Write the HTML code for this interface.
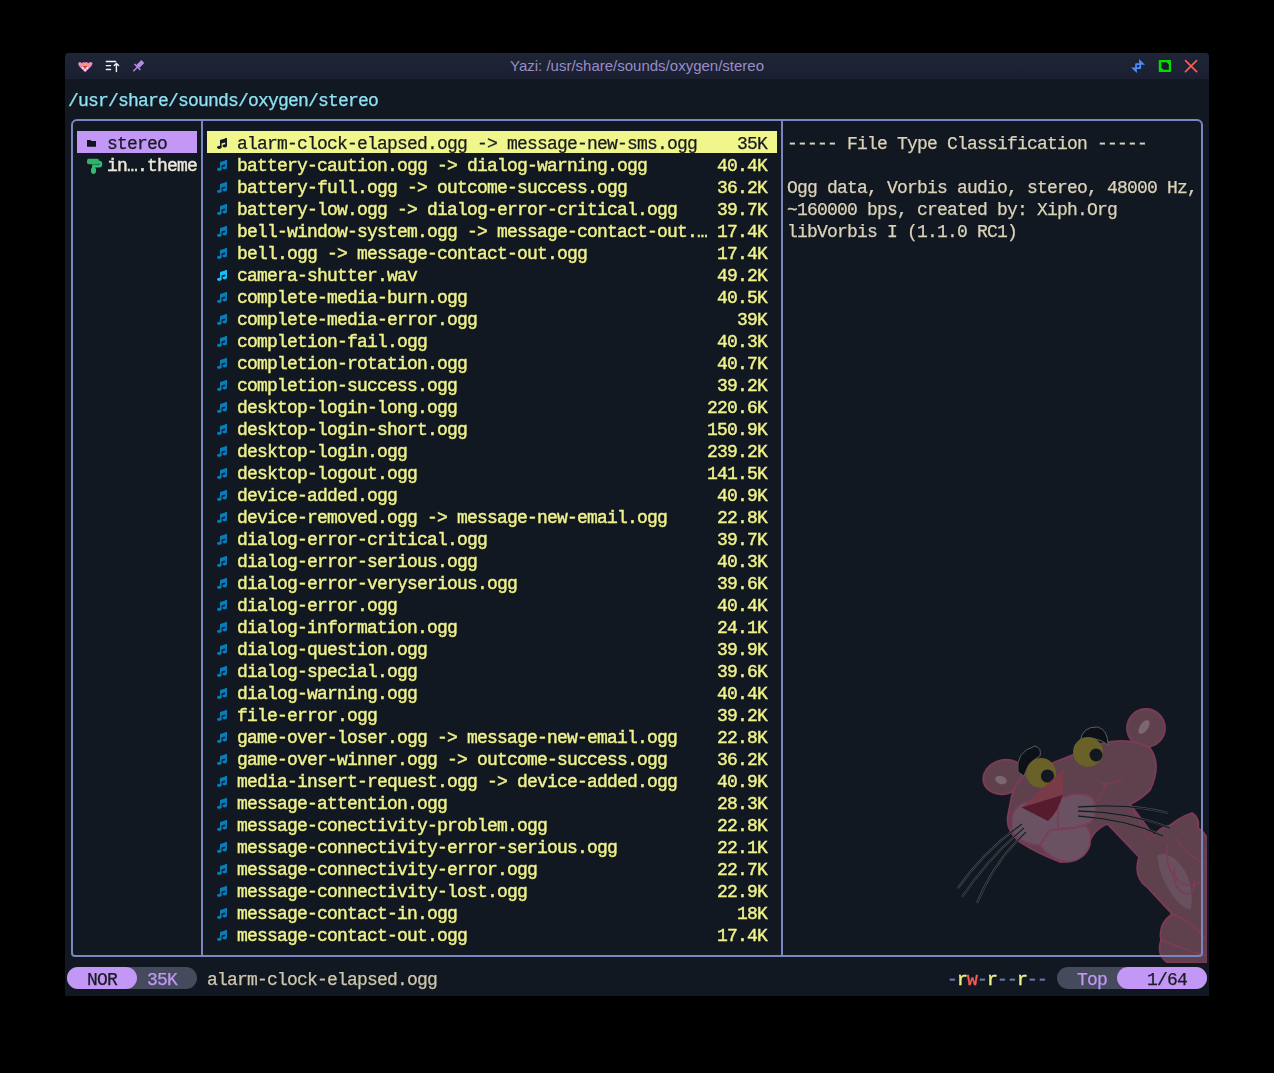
<!DOCTYPE html>
<html><head><meta charset="utf-8"><style>
*{margin:0;padding:0;box-sizing:border-box}
html,body{width:1274px;height:1073px;background:#000;overflow:hidden}
body{position:relative;font-family:"Liberation Mono",monospace;font-size:18px;letter-spacing:-0.8018px}
#win{position:absolute;left:65px;top:53px;width:1144px;height:943px;background:#121822;border-radius:4px 4px 0 0;overflow:hidden}
#tb{position:absolute;left:0;top:0;width:1144px;height:26px;background:linear-gradient(#1e2537,#1a2030)}
#title{position:absolute;left:0;width:1144px;top:0;height:26px;line-height:26px;text-align:center;font-family:"Liberation Sans",sans-serif;font-size:15px;letter-spacing:0;color:#9a8dc6}
.r{position:absolute;height:22px;line-height:22px;white-space:pre;will-change:transform;-webkit-text-stroke:0.25px currentColor}
.t{position:absolute;white-space:pre;height:22px;line-height:22px;top:2px}
.ic{position:absolute;display:block}
.b{font-weight:normal;-webkit-text-stroke:0.42px currentColor}
.hl{position:absolute;height:22px}
.ln{position:absolute;background:#7986c0}
</style></head><body>

<div id="win"><div id="tb"></div><div id="title">Yazi: /usr/share/sounds/oxygen/stereo</div></div>
<svg style="position:absolute;left:0;top:0" width="1274" height="90" viewBox="0 0 1274 90"><path d="M78.3 63.2 Q79.5 61.3 81 62.6 L82.2 63.2 Q83.6 61.2 85 62.8 Q86.6 61.2 88 63.2 L89.3 62.6 Q90.8 61.3 92.6 63.2 Q92.3 65 90.8 66.8 L85.2 72.2 L79.6 66.8 Q78.2 65 78.3 63.2 Z" fill="#f08cbd"/><circle cx="83.6" cy="64.6" r="1.1" fill="#d4bb10"/><circle cx="87" cy="64.6" r="1.1" fill="#d4bb10"/><path d="M82.5 66 L87.5 66 L85.1 68.6 Z" fill="#e5207a"/><circle cx="82.8" cy="68" r="1" fill="#f0eef0"/><circle cx="87.2" cy="68" r="1" fill="#f0eef0"/><circle cx="85.1" cy="70" r="1" fill="#f0eef0"/><g stroke="#f2f2f2" stroke-width="1.4" fill="none" stroke-linecap="round"><path d="M106.3 61.5 H115.6 M106.3 65.6 H110.6 M106.3 69.5 H110.6 M116.4 63.4 V71.6 M114.2 65.6 L116.4 63.4 L118.6 65.6"/></g><g fill="#b38de2"><path d="M141.4 60 L144.3 62.9 L139.3 67.9 L136.4 65 Z"/><path d="M134 64.6 L135.1 63.5 L141 69.4 L139.9 70.5 Z"/></g><path d="M137.6 67 L133.3 71.2" stroke="#b38de2" stroke-width="1.5"/><g fill="#4f8bf7"><path d="M1139.1 59 L1145 64.8 L1139.1 64.8 Z"/><path d="M1131 67.4 L1136.9 67.4 L1136.9 73.1 Z"/><path fill-rule="evenodd" d="M1136.2 63.2 H1140.1 Q1141.1 63.2 1141.1 64.2 V68.1 Q1141.1 69.1 1140.1 69.1 H1136.2 Q1135.2 69.1 1135.2 68.1 V64.2 Q1135.2 63.2 1136.2 63.2 Z M1136.9 64.9 V67.3 H1139.3 V64.9 Z"/></g><rect x="1158.8" y="60" width="12.2" height="12" rx="0.8" fill="#00e000"/><path d="M1161.3 62.2 H1166.6 L1168.8 64.4 V69.8 H1163.5 L1161.3 67.6 Z" fill="#161b27"/><g stroke="#ff5a55" stroke-width="1.7" stroke-linecap="round"><path d="M1185.5 60.6 L1196.6 71.7 M1196.6 60.6 L1185.5 71.7"/></g></svg>
<svg style="position:absolute;left:940px;top:690px" width="267" height="273" viewBox="940 690 267 273"><ellipse cx="1004" cy="777" rx="21" ry="17" transform="rotate(-15 1004 777)" fill="#5f414e" stroke="#7e3a58" stroke-width="1.8"/><ellipse cx="1001" cy="780" rx="6" ry="4" transform="rotate(20 1001 780)" fill="#7b6774"/><circle cx="1146" cy="728" r="19" fill="#5f414e" stroke="#7e3a58" stroke-width="1.8"/><ellipse cx="1144" cy="727" rx="4" ry="8" transform="rotate(35 1144 727)" fill="#7b6774"/><path d="M1012 795 Q1018 772 1045 766 L1100 744 Q1130 736 1150 748 Q1162 765 1150 790 Q1140 800 1130 804 L1154 836 Q1160 827 1169 826 Q1180 817 1192 813 Q1200 818 1198 828 Q1210 835 1207 850 L1207 963 L1168 963 Q1156 955 1161 940 Q1158 924 1172 914 L1147 887 Q1133 877 1139 857 L1107.5 824 Q1092 830 1088.5 846 Q1080 862 1060 862 Q1035 852 1020 842 Q1005 830 1008 815 Z" fill="#5f414e" stroke="#7e3a58" stroke-width="1.8"/><path d="M1157 856 Q1160 880 1176 900 Q1188 912 1191 908 Q1195 880 1178 862 Q1165 850 1157 856 Z" fill="#6a5262" opacity="0.9"/><g fill="none" stroke="#7e3a58" stroke-width="1.4"><path d="M1176 838 Q1188 858 1207 864"/><path d="M1168 843 Q1163 872 1183 884 Q1198 888 1204 876"/><path d="M1175 866 Q1171 890 1187 894 Q1196 893 1194 880"/><path d="M1130 804 L1150 842"/><path d="M1161 940 Q1185 950 1207 956"/><path d="M1172 914 Q1195 922 1207 942"/></g><path d="M1012 818 Q1015 800 1040 800 L1062 812 Q1065 838 1040 845 Q1020 845 1012 830 Z" fill="#6a5262" stroke="#7e3a58" stroke-width="1.5"/><path d="M1040 845 Q1050 860 1068 862 Q1085 860 1090 845 Q1092 830 1085 825 Q1065 830 1050 830 Z" fill="#6a5262" stroke="#7e3a58" stroke-width="1.5"/><path d="M1058 800 Q1075 790 1092 797 Q1100 812 1090 823 Q1075 830 1058 828 Z" fill="#6a5262" stroke="#7e3a58" stroke-width="1.5"/><path d="M1018 772 Q1015 752 1035 746 Q1042 748 1040 756 Q1028 762 1024 776 Z" fill="#0d1017" stroke="#5a5c64" stroke-width="1"/><path d="M1080 742 Q1082 726 1098 727 Q1108 730 1108 745 Q1095 734 1080 742 Z" fill="#0d1017" stroke="#5a5c64" stroke-width="1"/><circle cx="1041" cy="773" r="15" fill="#6a6129"/><circle cx="1047.5" cy="776" r="6.6" fill="#121722"/><circle cx="1088" cy="752" r="15" fill="#6a6129"/><circle cx="1096" cy="755" r="6.5" fill="#121722"/><path d="M1021.6 807.6 L1064 769 L1062.7 795 Z" fill="#7a3b48"/><path d="M1021.6 807.6 L1062.7 795 Q1058 812 1048 821 Z" fill="#561b2c"/><path d="M1100 783 Q1112 786 1123 778 M1105 784 Q1104 796 1094 803" fill="none" stroke="#7e3a58" stroke-width="1.2"/><g fill="none" stroke="#4a4c55" stroke-width="2.2"><path d="M1022 824 Q985 850 958 888"/><path d="M1024 828 Q990 856 962 897"/><path d="M1026 832 Q995 860 977 903"/><path d="M1078 807 Q1130 803 1168 813"/><path d="M1078 811 Q1130 812 1170 828"/><path d="M1078 816 Q1130 820 1163 836"/></g><g fill="none" stroke="#0c0f15" stroke-width="0.9"><path d="M1022 824 Q985 850 958 888"/><path d="M1024 828 Q990 856 962 897"/><path d="M1026 832 Q995 860 977 903"/><path d="M1078 807 Q1130 803 1168 813"/><path d="M1078 811 Q1130 812 1170 828"/><path d="M1078 816 Q1130 820 1163 836"/></g></svg>
<div class="r" style="left:67.5px;top:87px;color:#8de3f5"><span class="t" style="top:3px">/usr/share/sounds/oxygen/stereo</span></div>
<div style="position:absolute;left:71px;top:119px;width:1132px;height:838px;border:2px solid #7986c0;border-radius:6px 6px 4px 4px"></div>
<div class="ln" style="left:201px;top:119px;width:2px;height:838px"></div>
<div class="ln" style="left:781px;top:119px;width:2px;height:838px"></div>
<div class="hl" style="left:77px;top:131px;width:120px;background:#c297f5"></div>
<div class="r" style="left:106.5px;top:131px;color:#161a22"><span class="t">stereo</span></div>
<svg style="position:absolute;left:87px;top:139px" width="10" height="9" viewBox="0 0 10 9"><path d="M0 1 H3.6 L4.4 2 H9 V7.8 H0 Z" fill="#11141c"/></svg>
<div class="r b" style="left:106.5px;top:153px;color:#ebe8da"><span class="t">in….theme</span></div>
<svg style="position:absolute;left:86px;top:158px" width="17" height="17" viewBox="0 0 17 17"><path d="M12 4.2 H13.2 Q14.8 4.2 14.8 5.8 V6.4 Q14.8 8 13.2 8 H7.5 V10" fill="none" stroke="#31bd6f" stroke-width="2.8"/><rect x="1" y="0.7" width="12" height="5.5" rx="1.8" fill="#2db46a"/><rect x="5" y="9" width="5" height="7" rx="2.4" fill="#31bd6f"/></svg>
<div class="hl" style="left:207px;top:131px;width:570px;background:#f0f68b"></div>
<div style="position:absolute;left:217px;top:138px;width:10px;height:11px;color:#161a22"><svg class="ic" width="10" height="11" viewBox="0 0 10 11"><g fill="currentColor"><polygon points="3,2 10,0 10,4 4.6,5.6 3,5.8"/><rect x="3" y="2" width="1.6" height="7.5"/><rect x="8.2" y="0" width="1.8" height="8"/><ellipse cx="2.2" cy="9.3" rx="2.2" ry="1.6"/><ellipse cx="7.7" cy="7.8" rx="2.3" ry="1.6"/></g></svg></div>
<div class="r" style="left:236.5px;top:131px;color:#161a22"><span class="t">alarm-clock-elapsed.ogg -&gt; message-new-sms.ogg</span></div>
<div class="r" style="left:736.5px;top:131px;color:#161a22"><span class="t">35K</span></div>
<div style="position:absolute;left:217px;top:160px;width:10px;height:11px;color:#0a7cb8"><svg class="ic" width="10" height="11" viewBox="0 0 10 11"><g fill="currentColor"><polygon points="3,2 10,0 10,4 4.6,5.6 3,5.8"/><rect x="3" y="2" width="1.6" height="7.5"/><rect x="8.2" y="0" width="1.8" height="8"/><ellipse cx="2.2" cy="9.3" rx="2.2" ry="1.6"/><ellipse cx="7.7" cy="7.8" rx="2.3" ry="1.6"/></g></svg></div>
<div class="r b" style="left:236.5px;top:153px;color:#f0f28a"><span class="t">battery-caution.ogg -&gt; dialog-warning.ogg</span></div>
<div class="r b" style="left:716.5px;top:153px;color:#f0f28a"><span class="t">40.4K</span></div>
<div style="position:absolute;left:217px;top:182px;width:10px;height:11px;color:#0a7cb8"><svg class="ic" width="10" height="11" viewBox="0 0 10 11"><g fill="currentColor"><polygon points="3,2 10,0 10,4 4.6,5.6 3,5.8"/><rect x="3" y="2" width="1.6" height="7.5"/><rect x="8.2" y="0" width="1.8" height="8"/><ellipse cx="2.2" cy="9.3" rx="2.2" ry="1.6"/><ellipse cx="7.7" cy="7.8" rx="2.3" ry="1.6"/></g></svg></div>
<div class="r b" style="left:236.5px;top:175px;color:#f0f28a"><span class="t">battery-full.ogg -&gt; outcome-success.ogg</span></div>
<div class="r b" style="left:716.5px;top:175px;color:#f0f28a"><span class="t">36.2K</span></div>
<div style="position:absolute;left:217px;top:204px;width:10px;height:11px;color:#0a7cb8"><svg class="ic" width="10" height="11" viewBox="0 0 10 11"><g fill="currentColor"><polygon points="3,2 10,0 10,4 4.6,5.6 3,5.8"/><rect x="3" y="2" width="1.6" height="7.5"/><rect x="8.2" y="0" width="1.8" height="8"/><ellipse cx="2.2" cy="9.3" rx="2.2" ry="1.6"/><ellipse cx="7.7" cy="7.8" rx="2.3" ry="1.6"/></g></svg></div>
<div class="r b" style="left:236.5px;top:197px;color:#f0f28a"><span class="t">battery-low.ogg -&gt; dialog-error-critical.ogg</span></div>
<div class="r b" style="left:716.5px;top:197px;color:#f0f28a"><span class="t">39.7K</span></div>
<div style="position:absolute;left:217px;top:226px;width:10px;height:11px;color:#0a7cb8"><svg class="ic" width="10" height="11" viewBox="0 0 10 11"><g fill="currentColor"><polygon points="3,2 10,0 10,4 4.6,5.6 3,5.8"/><rect x="3" y="2" width="1.6" height="7.5"/><rect x="8.2" y="0" width="1.8" height="8"/><ellipse cx="2.2" cy="9.3" rx="2.2" ry="1.6"/><ellipse cx="7.7" cy="7.8" rx="2.3" ry="1.6"/></g></svg></div>
<div class="r b" style="left:236.5px;top:219px;color:#f0f28a"><span class="t">bell-window-system.ogg -&gt; message-contact-out.…</span></div>
<div class="r b" style="left:716.5px;top:219px;color:#f0f28a"><span class="t">17.4K</span></div>
<div style="position:absolute;left:217px;top:248px;width:10px;height:11px;color:#0a7cb8"><svg class="ic" width="10" height="11" viewBox="0 0 10 11"><g fill="currentColor"><polygon points="3,2 10,0 10,4 4.6,5.6 3,5.8"/><rect x="3" y="2" width="1.6" height="7.5"/><rect x="8.2" y="0" width="1.8" height="8"/><ellipse cx="2.2" cy="9.3" rx="2.2" ry="1.6"/><ellipse cx="7.7" cy="7.8" rx="2.3" ry="1.6"/></g></svg></div>
<div class="r b" style="left:236.5px;top:241px;color:#f0f28a"><span class="t">bell.ogg -&gt; message-contact-out.ogg</span></div>
<div class="r b" style="left:716.5px;top:241px;color:#f0f28a"><span class="t">17.4K</span></div>
<div style="position:absolute;left:217px;top:270px;width:10px;height:11px;color:#19bdf9"><svg class="ic" width="10" height="11" viewBox="0 0 10 11"><g fill="currentColor"><polygon points="3,2 10,0 10,4 4.6,5.6 3,5.8"/><rect x="3" y="2" width="1.6" height="7.5"/><rect x="8.2" y="0" width="1.8" height="8"/><ellipse cx="2.2" cy="9.3" rx="2.2" ry="1.6"/><ellipse cx="7.7" cy="7.8" rx="2.3" ry="1.6"/></g></svg></div>
<div class="r b" style="left:236.5px;top:263px;color:#f0f28a"><span class="t">camera-shutter.wav</span></div>
<div class="r b" style="left:716.5px;top:263px;color:#f0f28a"><span class="t">49.2K</span></div>
<div style="position:absolute;left:217px;top:292px;width:10px;height:11px;color:#0a7cb8"><svg class="ic" width="10" height="11" viewBox="0 0 10 11"><g fill="currentColor"><polygon points="3,2 10,0 10,4 4.6,5.6 3,5.8"/><rect x="3" y="2" width="1.6" height="7.5"/><rect x="8.2" y="0" width="1.8" height="8"/><ellipse cx="2.2" cy="9.3" rx="2.2" ry="1.6"/><ellipse cx="7.7" cy="7.8" rx="2.3" ry="1.6"/></g></svg></div>
<div class="r b" style="left:236.5px;top:285px;color:#f0f28a"><span class="t">complete-media-burn.ogg</span></div>
<div class="r b" style="left:716.5px;top:285px;color:#f0f28a"><span class="t">40.5K</span></div>
<div style="position:absolute;left:217px;top:314px;width:10px;height:11px;color:#0a7cb8"><svg class="ic" width="10" height="11" viewBox="0 0 10 11"><g fill="currentColor"><polygon points="3,2 10,0 10,4 4.6,5.6 3,5.8"/><rect x="3" y="2" width="1.6" height="7.5"/><rect x="8.2" y="0" width="1.8" height="8"/><ellipse cx="2.2" cy="9.3" rx="2.2" ry="1.6"/><ellipse cx="7.7" cy="7.8" rx="2.3" ry="1.6"/></g></svg></div>
<div class="r b" style="left:236.5px;top:307px;color:#f0f28a"><span class="t">complete-media-error.ogg</span></div>
<div class="r b" style="left:736.5px;top:307px;color:#f0f28a"><span class="t">39K</span></div>
<div style="position:absolute;left:217px;top:336px;width:10px;height:11px;color:#0a7cb8"><svg class="ic" width="10" height="11" viewBox="0 0 10 11"><g fill="currentColor"><polygon points="3,2 10,0 10,4 4.6,5.6 3,5.8"/><rect x="3" y="2" width="1.6" height="7.5"/><rect x="8.2" y="0" width="1.8" height="8"/><ellipse cx="2.2" cy="9.3" rx="2.2" ry="1.6"/><ellipse cx="7.7" cy="7.8" rx="2.3" ry="1.6"/></g></svg></div>
<div class="r b" style="left:236.5px;top:329px;color:#f0f28a"><span class="t">completion-fail.ogg</span></div>
<div class="r b" style="left:716.5px;top:329px;color:#f0f28a"><span class="t">40.3K</span></div>
<div style="position:absolute;left:217px;top:358px;width:10px;height:11px;color:#0a7cb8"><svg class="ic" width="10" height="11" viewBox="0 0 10 11"><g fill="currentColor"><polygon points="3,2 10,0 10,4 4.6,5.6 3,5.8"/><rect x="3" y="2" width="1.6" height="7.5"/><rect x="8.2" y="0" width="1.8" height="8"/><ellipse cx="2.2" cy="9.3" rx="2.2" ry="1.6"/><ellipse cx="7.7" cy="7.8" rx="2.3" ry="1.6"/></g></svg></div>
<div class="r b" style="left:236.5px;top:351px;color:#f0f28a"><span class="t">completion-rotation.ogg</span></div>
<div class="r b" style="left:716.5px;top:351px;color:#f0f28a"><span class="t">40.7K</span></div>
<div style="position:absolute;left:217px;top:380px;width:10px;height:11px;color:#0a7cb8"><svg class="ic" width="10" height="11" viewBox="0 0 10 11"><g fill="currentColor"><polygon points="3,2 10,0 10,4 4.6,5.6 3,5.8"/><rect x="3" y="2" width="1.6" height="7.5"/><rect x="8.2" y="0" width="1.8" height="8"/><ellipse cx="2.2" cy="9.3" rx="2.2" ry="1.6"/><ellipse cx="7.7" cy="7.8" rx="2.3" ry="1.6"/></g></svg></div>
<div class="r b" style="left:236.5px;top:373px;color:#f0f28a"><span class="t">completion-success.ogg</span></div>
<div class="r b" style="left:716.5px;top:373px;color:#f0f28a"><span class="t">39.2K</span></div>
<div style="position:absolute;left:217px;top:402px;width:10px;height:11px;color:#0a7cb8"><svg class="ic" width="10" height="11" viewBox="0 0 10 11"><g fill="currentColor"><polygon points="3,2 10,0 10,4 4.6,5.6 3,5.8"/><rect x="3" y="2" width="1.6" height="7.5"/><rect x="8.2" y="0" width="1.8" height="8"/><ellipse cx="2.2" cy="9.3" rx="2.2" ry="1.6"/><ellipse cx="7.7" cy="7.8" rx="2.3" ry="1.6"/></g></svg></div>
<div class="r b" style="left:236.5px;top:395px;color:#f0f28a"><span class="t">desktop-login-long.ogg</span></div>
<div class="r b" style="left:706.5px;top:395px;color:#f0f28a"><span class="t">220.6K</span></div>
<div style="position:absolute;left:217px;top:424px;width:10px;height:11px;color:#0a7cb8"><svg class="ic" width="10" height="11" viewBox="0 0 10 11"><g fill="currentColor"><polygon points="3,2 10,0 10,4 4.6,5.6 3,5.8"/><rect x="3" y="2" width="1.6" height="7.5"/><rect x="8.2" y="0" width="1.8" height="8"/><ellipse cx="2.2" cy="9.3" rx="2.2" ry="1.6"/><ellipse cx="7.7" cy="7.8" rx="2.3" ry="1.6"/></g></svg></div>
<div class="r b" style="left:236.5px;top:417px;color:#f0f28a"><span class="t">desktop-login-short.ogg</span></div>
<div class="r b" style="left:706.5px;top:417px;color:#f0f28a"><span class="t">150.9K</span></div>
<div style="position:absolute;left:217px;top:446px;width:10px;height:11px;color:#0a7cb8"><svg class="ic" width="10" height="11" viewBox="0 0 10 11"><g fill="currentColor"><polygon points="3,2 10,0 10,4 4.6,5.6 3,5.8"/><rect x="3" y="2" width="1.6" height="7.5"/><rect x="8.2" y="0" width="1.8" height="8"/><ellipse cx="2.2" cy="9.3" rx="2.2" ry="1.6"/><ellipse cx="7.7" cy="7.8" rx="2.3" ry="1.6"/></g></svg></div>
<div class="r b" style="left:236.5px;top:439px;color:#f0f28a"><span class="t">desktop-login.ogg</span></div>
<div class="r b" style="left:706.5px;top:439px;color:#f0f28a"><span class="t">239.2K</span></div>
<div style="position:absolute;left:217px;top:468px;width:10px;height:11px;color:#0a7cb8"><svg class="ic" width="10" height="11" viewBox="0 0 10 11"><g fill="currentColor"><polygon points="3,2 10,0 10,4 4.6,5.6 3,5.8"/><rect x="3" y="2" width="1.6" height="7.5"/><rect x="8.2" y="0" width="1.8" height="8"/><ellipse cx="2.2" cy="9.3" rx="2.2" ry="1.6"/><ellipse cx="7.7" cy="7.8" rx="2.3" ry="1.6"/></g></svg></div>
<div class="r b" style="left:236.5px;top:461px;color:#f0f28a"><span class="t">desktop-logout.ogg</span></div>
<div class="r b" style="left:706.5px;top:461px;color:#f0f28a"><span class="t">141.5K</span></div>
<div style="position:absolute;left:217px;top:490px;width:10px;height:11px;color:#0a7cb8"><svg class="ic" width="10" height="11" viewBox="0 0 10 11"><g fill="currentColor"><polygon points="3,2 10,0 10,4 4.6,5.6 3,5.8"/><rect x="3" y="2" width="1.6" height="7.5"/><rect x="8.2" y="0" width="1.8" height="8"/><ellipse cx="2.2" cy="9.3" rx="2.2" ry="1.6"/><ellipse cx="7.7" cy="7.8" rx="2.3" ry="1.6"/></g></svg></div>
<div class="r b" style="left:236.5px;top:483px;color:#f0f28a"><span class="t">device-added.ogg</span></div>
<div class="r b" style="left:716.5px;top:483px;color:#f0f28a"><span class="t">40.9K</span></div>
<div style="position:absolute;left:217px;top:512px;width:10px;height:11px;color:#0a7cb8"><svg class="ic" width="10" height="11" viewBox="0 0 10 11"><g fill="currentColor"><polygon points="3,2 10,0 10,4 4.6,5.6 3,5.8"/><rect x="3" y="2" width="1.6" height="7.5"/><rect x="8.2" y="0" width="1.8" height="8"/><ellipse cx="2.2" cy="9.3" rx="2.2" ry="1.6"/><ellipse cx="7.7" cy="7.8" rx="2.3" ry="1.6"/></g></svg></div>
<div class="r b" style="left:236.5px;top:505px;color:#f0f28a"><span class="t">device-removed.ogg -&gt; message-new-email.ogg</span></div>
<div class="r b" style="left:716.5px;top:505px;color:#f0f28a"><span class="t">22.8K</span></div>
<div style="position:absolute;left:217px;top:534px;width:10px;height:11px;color:#0a7cb8"><svg class="ic" width="10" height="11" viewBox="0 0 10 11"><g fill="currentColor"><polygon points="3,2 10,0 10,4 4.6,5.6 3,5.8"/><rect x="3" y="2" width="1.6" height="7.5"/><rect x="8.2" y="0" width="1.8" height="8"/><ellipse cx="2.2" cy="9.3" rx="2.2" ry="1.6"/><ellipse cx="7.7" cy="7.8" rx="2.3" ry="1.6"/></g></svg></div>
<div class="r b" style="left:236.5px;top:527px;color:#f0f28a"><span class="t">dialog-error-critical.ogg</span></div>
<div class="r b" style="left:716.5px;top:527px;color:#f0f28a"><span class="t">39.7K</span></div>
<div style="position:absolute;left:217px;top:556px;width:10px;height:11px;color:#0a7cb8"><svg class="ic" width="10" height="11" viewBox="0 0 10 11"><g fill="currentColor"><polygon points="3,2 10,0 10,4 4.6,5.6 3,5.8"/><rect x="3" y="2" width="1.6" height="7.5"/><rect x="8.2" y="0" width="1.8" height="8"/><ellipse cx="2.2" cy="9.3" rx="2.2" ry="1.6"/><ellipse cx="7.7" cy="7.8" rx="2.3" ry="1.6"/></g></svg></div>
<div class="r b" style="left:236.5px;top:549px;color:#f0f28a"><span class="t">dialog-error-serious.ogg</span></div>
<div class="r b" style="left:716.5px;top:549px;color:#f0f28a"><span class="t">40.3K</span></div>
<div style="position:absolute;left:217px;top:578px;width:10px;height:11px;color:#0a7cb8"><svg class="ic" width="10" height="11" viewBox="0 0 10 11"><g fill="currentColor"><polygon points="3,2 10,0 10,4 4.6,5.6 3,5.8"/><rect x="3" y="2" width="1.6" height="7.5"/><rect x="8.2" y="0" width="1.8" height="8"/><ellipse cx="2.2" cy="9.3" rx="2.2" ry="1.6"/><ellipse cx="7.7" cy="7.8" rx="2.3" ry="1.6"/></g></svg></div>
<div class="r b" style="left:236.5px;top:571px;color:#f0f28a"><span class="t">dialog-error-veryserious.ogg</span></div>
<div class="r b" style="left:716.5px;top:571px;color:#f0f28a"><span class="t">39.6K</span></div>
<div style="position:absolute;left:217px;top:600px;width:10px;height:11px;color:#0a7cb8"><svg class="ic" width="10" height="11" viewBox="0 0 10 11"><g fill="currentColor"><polygon points="3,2 10,0 10,4 4.6,5.6 3,5.8"/><rect x="3" y="2" width="1.6" height="7.5"/><rect x="8.2" y="0" width="1.8" height="8"/><ellipse cx="2.2" cy="9.3" rx="2.2" ry="1.6"/><ellipse cx="7.7" cy="7.8" rx="2.3" ry="1.6"/></g></svg></div>
<div class="r b" style="left:236.5px;top:593px;color:#f0f28a"><span class="t">dialog-error.ogg</span></div>
<div class="r b" style="left:716.5px;top:593px;color:#f0f28a"><span class="t">40.4K</span></div>
<div style="position:absolute;left:217px;top:622px;width:10px;height:11px;color:#0a7cb8"><svg class="ic" width="10" height="11" viewBox="0 0 10 11"><g fill="currentColor"><polygon points="3,2 10,0 10,4 4.6,5.6 3,5.8"/><rect x="3" y="2" width="1.6" height="7.5"/><rect x="8.2" y="0" width="1.8" height="8"/><ellipse cx="2.2" cy="9.3" rx="2.2" ry="1.6"/><ellipse cx="7.7" cy="7.8" rx="2.3" ry="1.6"/></g></svg></div>
<div class="r b" style="left:236.5px;top:615px;color:#f0f28a"><span class="t">dialog-information.ogg</span></div>
<div class="r b" style="left:716.5px;top:615px;color:#f0f28a"><span class="t">24.1K</span></div>
<div style="position:absolute;left:217px;top:644px;width:10px;height:11px;color:#0a7cb8"><svg class="ic" width="10" height="11" viewBox="0 0 10 11"><g fill="currentColor"><polygon points="3,2 10,0 10,4 4.6,5.6 3,5.8"/><rect x="3" y="2" width="1.6" height="7.5"/><rect x="8.2" y="0" width="1.8" height="8"/><ellipse cx="2.2" cy="9.3" rx="2.2" ry="1.6"/><ellipse cx="7.7" cy="7.8" rx="2.3" ry="1.6"/></g></svg></div>
<div class="r b" style="left:236.5px;top:637px;color:#f0f28a"><span class="t">dialog-question.ogg</span></div>
<div class="r b" style="left:716.5px;top:637px;color:#f0f28a"><span class="t">39.9K</span></div>
<div style="position:absolute;left:217px;top:666px;width:10px;height:11px;color:#0a7cb8"><svg class="ic" width="10" height="11" viewBox="0 0 10 11"><g fill="currentColor"><polygon points="3,2 10,0 10,4 4.6,5.6 3,5.8"/><rect x="3" y="2" width="1.6" height="7.5"/><rect x="8.2" y="0" width="1.8" height="8"/><ellipse cx="2.2" cy="9.3" rx="2.2" ry="1.6"/><ellipse cx="7.7" cy="7.8" rx="2.3" ry="1.6"/></g></svg></div>
<div class="r b" style="left:236.5px;top:659px;color:#f0f28a"><span class="t">dialog-special.ogg</span></div>
<div class="r b" style="left:716.5px;top:659px;color:#f0f28a"><span class="t">39.6K</span></div>
<div style="position:absolute;left:217px;top:688px;width:10px;height:11px;color:#0a7cb8"><svg class="ic" width="10" height="11" viewBox="0 0 10 11"><g fill="currentColor"><polygon points="3,2 10,0 10,4 4.6,5.6 3,5.8"/><rect x="3" y="2" width="1.6" height="7.5"/><rect x="8.2" y="0" width="1.8" height="8"/><ellipse cx="2.2" cy="9.3" rx="2.2" ry="1.6"/><ellipse cx="7.7" cy="7.8" rx="2.3" ry="1.6"/></g></svg></div>
<div class="r b" style="left:236.5px;top:681px;color:#f0f28a"><span class="t">dialog-warning.ogg</span></div>
<div class="r b" style="left:716.5px;top:681px;color:#f0f28a"><span class="t">40.4K</span></div>
<div style="position:absolute;left:217px;top:710px;width:10px;height:11px;color:#0a7cb8"><svg class="ic" width="10" height="11" viewBox="0 0 10 11"><g fill="currentColor"><polygon points="3,2 10,0 10,4 4.6,5.6 3,5.8"/><rect x="3" y="2" width="1.6" height="7.5"/><rect x="8.2" y="0" width="1.8" height="8"/><ellipse cx="2.2" cy="9.3" rx="2.2" ry="1.6"/><ellipse cx="7.7" cy="7.8" rx="2.3" ry="1.6"/></g></svg></div>
<div class="r b" style="left:236.5px;top:703px;color:#f0f28a"><span class="t">file-error.ogg</span></div>
<div class="r b" style="left:716.5px;top:703px;color:#f0f28a"><span class="t">39.2K</span></div>
<div style="position:absolute;left:217px;top:732px;width:10px;height:11px;color:#0a7cb8"><svg class="ic" width="10" height="11" viewBox="0 0 10 11"><g fill="currentColor"><polygon points="3,2 10,0 10,4 4.6,5.6 3,5.8"/><rect x="3" y="2" width="1.6" height="7.5"/><rect x="8.2" y="0" width="1.8" height="8"/><ellipse cx="2.2" cy="9.3" rx="2.2" ry="1.6"/><ellipse cx="7.7" cy="7.8" rx="2.3" ry="1.6"/></g></svg></div>
<div class="r b" style="left:236.5px;top:725px;color:#f0f28a"><span class="t">game-over-loser.ogg -&gt; message-new-email.ogg</span></div>
<div class="r b" style="left:716.5px;top:725px;color:#f0f28a"><span class="t">22.8K</span></div>
<div style="position:absolute;left:217px;top:754px;width:10px;height:11px;color:#0a7cb8"><svg class="ic" width="10" height="11" viewBox="0 0 10 11"><g fill="currentColor"><polygon points="3,2 10,0 10,4 4.6,5.6 3,5.8"/><rect x="3" y="2" width="1.6" height="7.5"/><rect x="8.2" y="0" width="1.8" height="8"/><ellipse cx="2.2" cy="9.3" rx="2.2" ry="1.6"/><ellipse cx="7.7" cy="7.8" rx="2.3" ry="1.6"/></g></svg></div>
<div class="r b" style="left:236.5px;top:747px;color:#f0f28a"><span class="t">game-over-winner.ogg -&gt; outcome-success.ogg</span></div>
<div class="r b" style="left:716.5px;top:747px;color:#f0f28a"><span class="t">36.2K</span></div>
<div style="position:absolute;left:217px;top:776px;width:10px;height:11px;color:#0a7cb8"><svg class="ic" width="10" height="11" viewBox="0 0 10 11"><g fill="currentColor"><polygon points="3,2 10,0 10,4 4.6,5.6 3,5.8"/><rect x="3" y="2" width="1.6" height="7.5"/><rect x="8.2" y="0" width="1.8" height="8"/><ellipse cx="2.2" cy="9.3" rx="2.2" ry="1.6"/><ellipse cx="7.7" cy="7.8" rx="2.3" ry="1.6"/></g></svg></div>
<div class="r b" style="left:236.5px;top:769px;color:#f0f28a"><span class="t">media-insert-request.ogg -&gt; device-added.ogg</span></div>
<div class="r b" style="left:716.5px;top:769px;color:#f0f28a"><span class="t">40.9K</span></div>
<div style="position:absolute;left:217px;top:798px;width:10px;height:11px;color:#0a7cb8"><svg class="ic" width="10" height="11" viewBox="0 0 10 11"><g fill="currentColor"><polygon points="3,2 10,0 10,4 4.6,5.6 3,5.8"/><rect x="3" y="2" width="1.6" height="7.5"/><rect x="8.2" y="0" width="1.8" height="8"/><ellipse cx="2.2" cy="9.3" rx="2.2" ry="1.6"/><ellipse cx="7.7" cy="7.8" rx="2.3" ry="1.6"/></g></svg></div>
<div class="r b" style="left:236.5px;top:791px;color:#f0f28a"><span class="t">message-attention.ogg</span></div>
<div class="r b" style="left:716.5px;top:791px;color:#f0f28a"><span class="t">28.3K</span></div>
<div style="position:absolute;left:217px;top:820px;width:10px;height:11px;color:#0a7cb8"><svg class="ic" width="10" height="11" viewBox="0 0 10 11"><g fill="currentColor"><polygon points="3,2 10,0 10,4 4.6,5.6 3,5.8"/><rect x="3" y="2" width="1.6" height="7.5"/><rect x="8.2" y="0" width="1.8" height="8"/><ellipse cx="2.2" cy="9.3" rx="2.2" ry="1.6"/><ellipse cx="7.7" cy="7.8" rx="2.3" ry="1.6"/></g></svg></div>
<div class="r b" style="left:236.5px;top:813px;color:#f0f28a"><span class="t">message-conectivity-problem.ogg</span></div>
<div class="r b" style="left:716.5px;top:813px;color:#f0f28a"><span class="t">22.8K</span></div>
<div style="position:absolute;left:217px;top:842px;width:10px;height:11px;color:#0a7cb8"><svg class="ic" width="10" height="11" viewBox="0 0 10 11"><g fill="currentColor"><polygon points="3,2 10,0 10,4 4.6,5.6 3,5.8"/><rect x="3" y="2" width="1.6" height="7.5"/><rect x="8.2" y="0" width="1.8" height="8"/><ellipse cx="2.2" cy="9.3" rx="2.2" ry="1.6"/><ellipse cx="7.7" cy="7.8" rx="2.3" ry="1.6"/></g></svg></div>
<div class="r b" style="left:236.5px;top:835px;color:#f0f28a"><span class="t">message-connectivity-error-serious.ogg</span></div>
<div class="r b" style="left:716.5px;top:835px;color:#f0f28a"><span class="t">22.1K</span></div>
<div style="position:absolute;left:217px;top:864px;width:10px;height:11px;color:#0a7cb8"><svg class="ic" width="10" height="11" viewBox="0 0 10 11"><g fill="currentColor"><polygon points="3,2 10,0 10,4 4.6,5.6 3,5.8"/><rect x="3" y="2" width="1.6" height="7.5"/><rect x="8.2" y="0" width="1.8" height="8"/><ellipse cx="2.2" cy="9.3" rx="2.2" ry="1.6"/><ellipse cx="7.7" cy="7.8" rx="2.3" ry="1.6"/></g></svg></div>
<div class="r b" style="left:236.5px;top:857px;color:#f0f28a"><span class="t">message-connectivity-error.ogg</span></div>
<div class="r b" style="left:716.5px;top:857px;color:#f0f28a"><span class="t">22.7K</span></div>
<div style="position:absolute;left:217px;top:886px;width:10px;height:11px;color:#0a7cb8"><svg class="ic" width="10" height="11" viewBox="0 0 10 11"><g fill="currentColor"><polygon points="3,2 10,0 10,4 4.6,5.6 3,5.8"/><rect x="3" y="2" width="1.6" height="7.5"/><rect x="8.2" y="0" width="1.8" height="8"/><ellipse cx="2.2" cy="9.3" rx="2.2" ry="1.6"/><ellipse cx="7.7" cy="7.8" rx="2.3" ry="1.6"/></g></svg></div>
<div class="r b" style="left:236.5px;top:879px;color:#f0f28a"><span class="t">message-connectivity-lost.ogg</span></div>
<div class="r b" style="left:716.5px;top:879px;color:#f0f28a"><span class="t">22.9K</span></div>
<div style="position:absolute;left:217px;top:908px;width:10px;height:11px;color:#0a7cb8"><svg class="ic" width="10" height="11" viewBox="0 0 10 11"><g fill="currentColor"><polygon points="3,2 10,0 10,4 4.6,5.6 3,5.8"/><rect x="3" y="2" width="1.6" height="7.5"/><rect x="8.2" y="0" width="1.8" height="8"/><ellipse cx="2.2" cy="9.3" rx="2.2" ry="1.6"/><ellipse cx="7.7" cy="7.8" rx="2.3" ry="1.6"/></g></svg></div>
<div class="r b" style="left:236.5px;top:901px;color:#f0f28a"><span class="t">message-contact-in.ogg</span></div>
<div class="r b" style="left:736.5px;top:901px;color:#f0f28a"><span class="t">18K</span></div>
<div style="position:absolute;left:217px;top:930px;width:10px;height:11px;color:#0a7cb8"><svg class="ic" width="10" height="11" viewBox="0 0 10 11"><g fill="currentColor"><polygon points="3,2 10,0 10,4 4.6,5.6 3,5.8"/><rect x="3" y="2" width="1.6" height="7.5"/><rect x="8.2" y="0" width="1.8" height="8"/><ellipse cx="2.2" cy="9.3" rx="2.2" ry="1.6"/><ellipse cx="7.7" cy="7.8" rx="2.3" ry="1.6"/></g></svg></div>
<div class="r b" style="left:236.5px;top:923px;color:#f0f28a"><span class="t">message-contact-out.ogg</span></div>
<div class="r b" style="left:716.5px;top:923px;color:#f0f28a"><span class="t">17.4K</span></div>
<div class="r" style="left:786.5px;top:131px;color:#dbd3b8"><span class="t">----- File Type Classification -----</span></div>
<div class="r" style="left:786.5px;top:175px;color:#dbd3b8"><span class="t">Ogg data, Vorbis audio, stereo, 48000 Hz,</span></div>
<div class="r" style="left:786.5px;top:197px;color:#dbd3b8"><span class="t">~160000 bps, created by: Xiph.Org</span></div>
<div class="r" style="left:786.5px;top:219px;color:#dbd3b8"><span class="t">libVorbis I (1.1.0 RC1)</span></div>
<div style="position:absolute;left:67px;top:967px;width:130px;height:22px;background:#454a5d;border-radius:11px"></div>
<div style="position:absolute;left:67px;top:967px;width:70px;height:22px;background:#c297f5;border-radius:11px"></div>
<div class="r" style="left:86.5px;top:967px;color:#1a1c26"><span class="t">NOR</span></div>
<div class="r" style="left:146.5px;top:967px;color:#c297f5"><span class="t">35K</span></div>
<div class="r" style="left:206.5px;top:967px;color:#cfc7ad"><span class="t">alarm-clock-elapsed.ogg</span></div>
<div class="r b" style="left:946.5px;top:967px;color:#6c7aa8"><span class="t">-</span></div>
<div class="r b" style="left:956.5px;top:967px;color:#f0f28a"><span class="t">r</span></div>
<div class="r b" style="left:966.5px;top:967px;color:#ff5a5a"><span class="t">w</span></div>
<div class="r b" style="left:976.5px;top:967px;color:#6c7aa8"><span class="t">-</span></div>
<div class="r b" style="left:986.5px;top:967px;color:#f0f28a"><span class="t">r</span></div>
<div class="r b" style="left:996.5px;top:967px;color:#6c7aa8"><span class="t">-</span></div>
<div class="r b" style="left:1006.5px;top:967px;color:#6c7aa8"><span class="t">-</span></div>
<div class="r b" style="left:1016.5px;top:967px;color:#f0f28a"><span class="t">r</span></div>
<div class="r b" style="left:1026.5px;top:967px;color:#6c7aa8"><span class="t">-</span></div>
<div class="r b" style="left:1036.5px;top:967px;color:#6c7aa8"><span class="t">-</span></div>
<div style="position:absolute;left:1057px;top:967px;width:150px;height:22px;background:#454a5d;border-radius:11px"></div>
<div style="position:absolute;left:1117px;top:967px;width:90px;height:22px;background:#c297f5;border-radius:11px"></div>
<div class="r" style="left:1076.5px;top:967px;color:#c297f5"><span class="t">Top</span></div>
<div class="r" style="left:1146.5px;top:967px;color:#1a1c26"><span class="t">1/64</span></div>
</body></html>
